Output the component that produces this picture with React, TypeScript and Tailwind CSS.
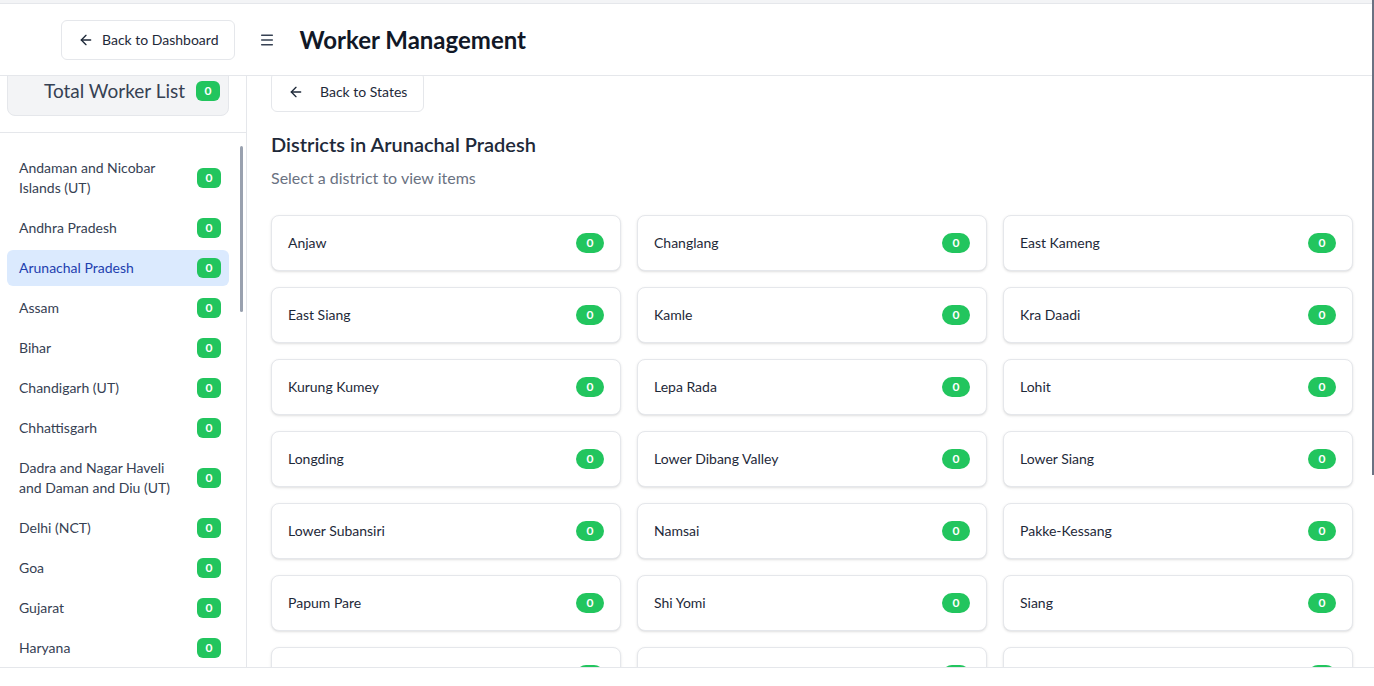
import { ArrowLeft, Menu } from 'lucide-react';

const states = [
  'Andaman and Nicobar Islands (UT)',
  'Andhra Pradesh',
  'Arunachal Pradesh',
  'Assam',
  'Bihar',
  'Chandigarh (UT)',
  'Chhattisgarh',
  'Dadra and Nagar Haveli and Daman and Diu (UT)',
  'Delhi (NCT)',
  'Goa',
  'Gujarat',
  'Haryana',
];

const districts = [
  'Anjaw', 'Changlang', 'East Kameng',
  'East Siang', 'Kamle', 'Kra Daadi',
  'Kurung Kumey', 'Lepa Rada', 'Lohit',
  'Longding', 'Lower Dibang Valley', 'Lower Siang',
  'Lower Subansiri', 'Namsai', 'Pakke-Kessang',
  'Papum Pare', 'Shi Yomi', 'Siang',
  'Tawang', 'Tirap', 'Upper Dibang Valley',
];

const activeState = 'Arunachal Pradesh';

function Count({ rounded = 'md' }: { rounded?: 'md' | 'full' }) {
  return (
    <span
      className={`flex shrink-0 items-center justify-center h-5 bg-[#22c55e] text-white text-xs font-bold leading-none ${
        rounded === 'full' ? 'rounded-full w-7' : 'rounded-md w-6'
      }`}
    >
      0
    </span>
  );
}

export default function App() {
  return (
    <div className="relative h-screen flex flex-col overflow-hidden bg-white font-['Lato',sans-serif]">
      <div className="h-1 bg-gray-100 border-b border-gray-200 shrink-0" />

      <header className="h-[72px] shrink-0 flex items-center pl-[61px] border-b border-gray-200 bg-white">
        <button className="flex items-center gap-2 h-10 px-4 text-sm text-gray-800 bg-white border border-gray-200 rounded-md">
          <ArrowLeft size={16} strokeWidth={2} />
          Back to Dashboard
        </button>
        <Menu size={16} strokeWidth={2.2} className="ml-6 text-gray-700" />
        <h1 className="ml-6 text-2xl font-bold text-[#111827]">Worker Management</h1>
      </header>

      <div className="flex-1 flex overflow-hidden">
        {/* sidebar */}
        <aside className="relative w-[247px] shrink-0 border-r border-gray-200 flex flex-col overflow-hidden">
          <div className="pl-[7px] pr-[17px] pb-4 border-b border-gray-200 shrink-0">
            <div className="-mt-[10px] h-[50px] flex items-center justify-between pl-[36px] pr-[8px] bg-gray-100 border border-gray-200 rounded-lg">
              <span className="text-[19px] text-gray-700">Total Worker List</span>
              <Count />
            </div>
          </div>

          <div className="flex-1 overflow-hidden pt-[17px] pl-[7px] pr-[17px] flex flex-col gap-1">
            {states.map((name) => (
              <div
                key={name}
                className={`shrink-0 flex items-center justify-between pl-3 pr-2 py-2 rounded-md text-sm leading-5 ${
                  name === activeState ? 'bg-[#dbeafe] text-[#1e40af]' : 'text-gray-700'
                }`}
              >
                <span className="max-w-[165px]">{name}</span>
                <Count />
              </div>
            ))}
          </div>

          {/* list scroll thumb */}
          <div className="absolute left-[240px] top-[70px] w-[3px] h-[166px] rounded-full bg-gray-400" />
        </aside>

        {/* main */}
        <main className="flex-1 overflow-hidden pl-6 pr-[21px]">
          <button className="-mt-1 flex items-center gap-4 h-10 px-4 text-sm text-gray-800 bg-white border border-gray-200 rounded-md">
            <ArrowLeft size={16} strokeWidth={2} />
            Back to States
          </button>

          <h2 className="mt-[18px] text-xl leading-7 font-semibold text-gray-800">
            Districts in Arunachal Pradesh
          </h2>
          <p className="mt-2 text-base text-gray-500">Select a district to view items</p>

          <div className="mt-[25px] grid grid-cols-3 gap-4">
            {districts.map((d) => (
              <div
                key={d}
                className="h-14 flex items-center justify-between px-4 bg-white border border-gray-200 rounded-lg shadow-sm"
              >
                <span className="text-sm text-gray-800">{d}</span>
                <Count rounded="full" />
              </div>
            ))}
          </div>
        </main>
      </div>

      <footer className="h-[19px] shrink-0 border-t border-gray-200 bg-white" />

      {/* page scroll thumb */}
      <div className="absolute right-0 top-0 w-[2px] h-[475px] bg-gray-500" />
    </div>
  );
}
